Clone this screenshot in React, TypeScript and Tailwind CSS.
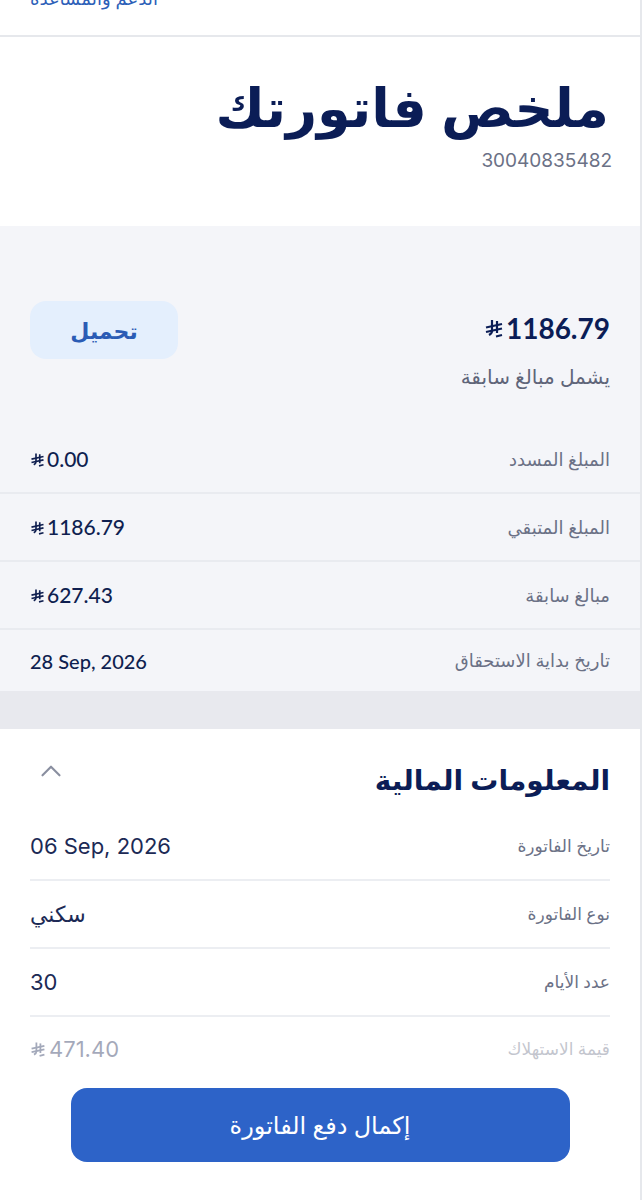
import React from 'react';
import { ChevronUp } from 'lucide-react';

const arabic = { fontFamily: '"Noto Sans", "DejaVu Sans", sans-serif' };
const latin = { fontFamily: 'Lato, "Noto Sans", "DejaVu Sans", sans-serif' };
const geo = { fontFamily: 'Inter, "Noto Sans", "DejaVu Sans", sans-serif' };

const Riyal = ({ className = '' }: { className?: string }) => (
  <svg className={className} viewBox="0 0 20 20" fill="none" stroke="currentColor" strokeWidth={2.2} strokeLinecap="butt">
    <path d="M8 2v11c0 2-1 3-3 4" />
    <path d="M13 3v12" />
    <path d="M2 9.5l16-3.5" />
    <path d="M2 14l16-3.5" />
    <path d="M12 18.5l6-1.5" />
  </svg>
);

interface SummaryRow {
  label: string;
  value: string;
  money?: boolean;
}

const summaryRows: SummaryRow[] = [
  { label: 'المبلغ المسدد', value: '0.00', money: true },
  { label: 'المبلغ المتبقي', value: '1186.79', money: true },
  { label: 'مبالغ سابقة', value: '627.43', money: true },
  { label: 'تاريخ بداية الاستحقاق', value: '28 Sep, 2026' },
];

const financeRows: SummaryRow[] = [
  { label: 'تاريخ الفاتورة', value: '06 Sep, 2026' },
  { label: 'نوع الفاتورة', value: 'سكني' },
  { label: 'عدد الأيام', value: '30' },
];

const Money = ({ value, className = '', iconClass = '' }: { value: string; className?: string; iconClass?: string }) => (
  <span dir="ltr" className={`inline-flex items-center gap-[2px] ${className}`} style={latin}>
    <Riyal className={iconClass} />
    <span>{value}</span>
  </span>
);

export default function App() {
  return (
    <div dir="rtl" className="w-[642px] min-h-[1200px] bg-white border-r-2 border-[#e6e8ec] text-[#0c1d52]" style={arabic}>
      {/* top link, cut by the viewport */}
      <div className="h-[35px] overflow-hidden flex justify-end px-[30px]">
        <a className="-mt-[16px] text-[18px] text-[#2d5fb8] leading-[28px]">الدعم والمساعدة</a>
      </div>
      <div className="h-[2px] bg-[#e6e8ec]" />

      {/* title */}
      <div className="pt-[36px] pb-[52px] pr-[31px]">
        <h1 className="text-[54px] font-bold leading-[66px] text-[#0b1d56]">ملخص فاتورتك</h1>
        <div className="text-[19px] text-[#6b7186] leading-[26px] mt-[9px] -mr-[3px]" style={geo}>
          30040835482
        </div>
      </div>

      {/* summary panel */}
      <div className="bg-[#f4f5f9]">
        <div className="flex justify-between items-start pt-[75px] px-[30px]">
          <div className="flex flex-col items-start">
            <Money value="1186.79" className="text-[28px] font-bold leading-[40px] text-[#0b1d56] mt-[7px]" iconClass="w-[20px] h-[20px]" />
            <div className="text-[20px] text-[#5f6579] leading-[30px] mt-[14px]">يشمل مبالغ سابقة</div>
          </div>
          <button className="w-[148px] h-[58px] rounded-[16px] bg-[#e4effd] text-[22px] font-semibold text-[#2b5cb5]">
            تحميل
          </button>
        </div>
        <div className="mt-[34px]">
          {summaryRows.map((r, i) => (
            <div
              key={r.label}
              className={`flex justify-between items-center px-[30px] ${i < summaryRows.length - 1 ? 'h-[68px] border-b-2 border-[#e9ebf0]' : 'h-[61px]'}`}
            >
              <span className="text-[18px] text-[#6b7186]">{r.label}</span>
              {r.money ? (
                <Money value={r.value} className="text-[21px] font-medium text-[#0f1f50]" iconClass="w-[15px] h-[15px]" />
              ) : (
                <span dir="ltr" className="text-[20px] font-medium text-[#0f1f50]" style={latin}>{r.value}</span>
              )}
            </div>
          ))}
        </div>
      </div>
      <div className="h-[38px] bg-[#e8e9ee]" />

      {/* financial info */}
      <div className="px-[30px] pt-[28px]">
        <div className="flex justify-between items-center h-[44px]">
          <h2 className="text-[28px] font-bold text-[#0b1d56]">المعلومات المالية</h2>
          <ChevronUp className="w-[34px] h-[34px] text-[#8a8fa0] -mt-[16px] ml-[4px]" strokeWidth={1.5} />
        </div>
        <div className="mt-[12px]">
          {financeRows.map((r) => (
            <div key={r.label} className="flex justify-between items-center h-[68px] border-b-2 border-[#eceef2]">
              <span className="text-[17px] text-[#6b7186]">{r.label}</span>
              <span dir="auto" className="text-[22px] text-[#1c2a55]" style={geo}>{r.value}</span>
            </div>
          ))}
          <div className="flex justify-between items-center h-[64px] opacity-40">
            <span className="text-[17px] text-[#6b7186]">قيمة الاستهلاك</span>
            <span dir="ltr" className="inline-flex items-center gap-[3px] text-[22px] text-[#1c2a55]" style={geo}>
              <Riyal className="w-[16px] h-[16px]" />
              471.40
            </span>
          </div>
        </div>
        <div className="flex justify-center pt-[7px] pb-[40px]">
          <button className="w-[499px] h-[74px] rounded-[16px] bg-[#2d63c8] text-white text-[24px]">
            إكمال دفع الفاتورة
          </button>
        </div>
      </div>
    </div>
  );
}
